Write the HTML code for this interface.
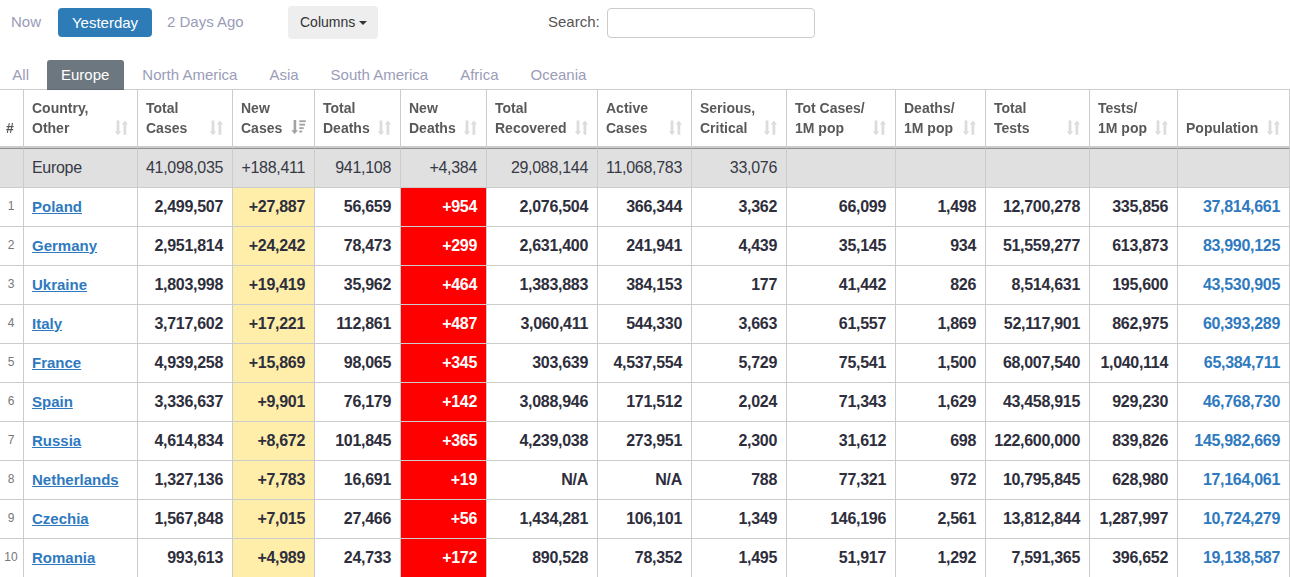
<!DOCTYPE html><html><head><meta charset="utf-8"><style>*{box-sizing:border-box;margin:0;padding:0}
html,body{width:1290px;height:577px;overflow:hidden;background:#fff;font-family:"Liberation Sans",sans-serif;color:#333}
.top{position:absolute;left:0;top:0;width:1290px;height:50px}
.top>*{position:absolute}
.now{left:11px;top:14px;font-size:15px;color:#9a9cb8;line-height:16px}
.btnp{left:58px;top:8px;width:94px;height:29px;background:#2d7cb8;border-radius:4px;color:#fff;font-size:15px;line-height:29px;text-align:center}
.days{left:167px;top:14px;font-size:15px;color:#9a9cb8;line-height:16px}
.colbtn{left:288px;top:6px;width:90px;height:33px;background:#eee;border-radius:4px;color:#333;font-size:14px;line-height:33px;padding-left:12px}
.caret{display:inline-block;width:0;height:0;border-top:4px solid #333;border-left:4px solid transparent;border-right:4px solid transparent;vertical-align:middle;margin-left:0px;position:relative;top:0px}
.search{left:548px;top:14px;font-size:15px;color:#555;line-height:16px}
.sinput{left:607px;top:8px;width:208px;height:30px;border:1px solid #ccc;border-radius:4px}
.tabs{position:absolute;left:-1.7px;top:60px;z-index:2;list-style:none;white-space:nowrap;font-size:15px}
.tabs li{display:inline-block;padding:0 14px;height:30px;line-height:30px;color:#9a9cb8;border-radius:3px 3px 0 0;margin-right:4px}
.tabs li.active{padding-right:15px;background:#6c777f;color:#fff;box-shadow:inset 0 -1px 0 #5f6870}
table{position:absolute;left:0;top:89px;border-collapse:separate;border-spacing:0;table-layout:fixed;width:1290px;border-top:1px solid #ccc}
th,td{border-right:1px solid #ccc;border-bottom:1px solid #ccc;overflow:hidden;white-space:nowrap}
th{height:58px;position:relative;font-size:14px;font-weight:bold;color:#595959;text-align:left;vertical-align:bottom;padding:0 0 8px 8px;line-height:20px;border-bottom:2px solid #ccc}
th.c0{padding-left:6px}
.si{position:absolute;right:8px;bottom:10px;color:#dcdcdc}
.sd{position:absolute;right:7px;bottom:11px;color:#a3a3a3}
td{height:39px;font-size:16px;letter-spacing:-0.3px;font-weight:bold;color:#2e2e3c;text-align:right;padding:0 9px 1px 8px;vertical-align:middle}
tr.eu td{height:40px;background:#e0e0e0;font-weight:normal;font-size:16px;color:#363945;border-top:1px solid #909090}
tr.eu td.c1{text-align:left}
td.c0{font-size:12px;letter-spacing:0;font-weight:normal;color:#777;text-align:center;padding:0 1px 3px 0}
td.c1{text-align:left}
td.c1 a{color:#2f7abf;text-decoration:underline;font-size:15px;letter-spacing:0}
tr.r td.c3{background:#ffeeaa}
tr.r td.c5{background:#f00;color:#fff}
tr.r td.c13{color:#2f7abf}

.hd{will-change:transform}
</style></head><body>
<div class="top">
<a class="pill now">Now</a><a class="btnp">Yesterday</a><a class="pill days">2 Days Ago</a>
<span class="colbtn">Columns <span class="caret"></span></span>
<label class="search">Search:</label><span class="sinput"></span>
</div>
<ul class="tabs"><li class="t-all">All</li><li class="active t-eu">Europe</li><li class="t-na">North America</li><li class="t-as">Asia</li><li class="t-sa">South America</li><li class="t-af">Africa</li><li class="t-oc">Oceania</li></ul>

<table><colgroup><col style="width:24px"><col style="width:114px"><col style="width:95px"><col style="width:82px"><col style="width:86px"><col style="width:86px"><col style="width:111px"><col style="width:94px"><col style="width:95px"><col style="width:109px"><col style="width:90px"><col style="width:104px"><col style="width:88px"><col style="width:112px"></colgroup>
<thead><tr>
<th class="c0"><div class="hd">#</div></th>
<th class="c1"><div class="hd">Country,<br>Other</div><svg class="si" width="15" height="16" viewBox="0 0 15 16"><path d="M2.6 0.6h2.8v10.6h1.8l-3.2 4-3.2-4h1.8z M9.5 14.8h2.8v-10.4h1.7l-3.15-4-3.15 4h1.8z" fill="currentColor"/></svg></th>
<th class="c2"><div class="hd">Total<br>Cases</div><svg class="si" width="15" height="16" viewBox="0 0 15 16"><path d="M2.6 0.6h2.8v10.6h1.8l-3.2 4-3.2-4h1.8z M9.5 14.8h2.8v-10.4h1.7l-3.15-4-3.15 4h1.8z" fill="currentColor"/></svg></th>
<th class="c3"><div class="hd">New<br>Cases</div><svg class="sd" width="17" height="16" viewBox="0 0 17 16"><path d="M3.6 1.1h2.6v10.2h1.8l-3.4 3.6-3.4-3.6h2.4z" fill="currentColor"/><rect x="9.3" y="1.3" width="6.5" height="1.8" fill="currentColor"/><rect x="9.3" y="4.7" width="5.7" height="1.9" fill="currentColor"/><rect x="9.3" y="8.2" width="4.4" height="1.8" fill="currentColor"/><rect x="9.3" y="11.6" width="2.9" height="1.9" fill="currentColor"/></svg></th>
<th class="c4"><div class="hd">Total<br>Deaths</div><svg class="si" width="15" height="16" viewBox="0 0 15 16"><path d="M2.6 0.6h2.8v10.6h1.8l-3.2 4-3.2-4h1.8z M9.5 14.8h2.8v-10.4h1.7l-3.15-4-3.15 4h1.8z" fill="currentColor"/></svg></th>
<th class="c5"><div class="hd">New<br>Deaths</div><svg class="si" width="15" height="16" viewBox="0 0 15 16"><path d="M2.6 0.6h2.8v10.6h1.8l-3.2 4-3.2-4h1.8z M9.5 14.8h2.8v-10.4h1.7l-3.15-4-3.15 4h1.8z" fill="currentColor"/></svg></th>
<th class="c6"><div class="hd">Total<br>Recovered</div><svg class="si" width="15" height="16" viewBox="0 0 15 16"><path d="M2.6 0.6h2.8v10.6h1.8l-3.2 4-3.2-4h1.8z M9.5 14.8h2.8v-10.4h1.7l-3.15-4-3.15 4h1.8z" fill="currentColor"/></svg></th>
<th class="c7"><div class="hd">Active<br>Cases</div><svg class="si" width="15" height="16" viewBox="0 0 15 16"><path d="M2.6 0.6h2.8v10.6h1.8l-3.2 4-3.2-4h1.8z M9.5 14.8h2.8v-10.4h1.7l-3.15-4-3.15 4h1.8z" fill="currentColor"/></svg></th>
<th class="c8"><div class="hd">Serious,<br>Critical</div><svg class="si" width="15" height="16" viewBox="0 0 15 16"><path d="M2.6 0.6h2.8v10.6h1.8l-3.2 4-3.2-4h1.8z M9.5 14.8h2.8v-10.4h1.7l-3.15-4-3.15 4h1.8z" fill="currentColor"/></svg></th>
<th class="c9"><div class="hd">Tot&nbsp;Cases/<br>1M pop</div><svg class="si" width="15" height="16" viewBox="0 0 15 16"><path d="M2.6 0.6h2.8v10.6h1.8l-3.2 4-3.2-4h1.8z M9.5 14.8h2.8v-10.4h1.7l-3.15-4-3.15 4h1.8z" fill="currentColor"/></svg></th>
<th class="c10"><div class="hd">Deaths/<br>1M pop</div><svg class="si" width="15" height="16" viewBox="0 0 15 16"><path d="M2.6 0.6h2.8v10.6h1.8l-3.2 4-3.2-4h1.8z M9.5 14.8h2.8v-10.4h1.7l-3.15-4-3.15 4h1.8z" fill="currentColor"/></svg></th>
<th class="c11"><div class="hd">Total<br>Tests</div><svg class="si" width="15" height="16" viewBox="0 0 15 16"><path d="M2.6 0.6h2.8v10.6h1.8l-3.2 4-3.2-4h1.8z M9.5 14.8h2.8v-10.4h1.7l-3.15-4-3.15 4h1.8z" fill="currentColor"/></svg></th>
<th class="c12"><div class="hd">Tests/<br>1M pop</div><svg class="si" width="15" height="16" viewBox="0 0 15 16"><path d="M2.6 0.6h2.8v10.6h1.8l-3.2 4-3.2-4h1.8z M9.5 14.8h2.8v-10.4h1.7l-3.15-4-3.15 4h1.8z" fill="currentColor"/></svg></th>
<th class="c13"><div class="hd">Population</div><svg class="si" width="15" height="16" viewBox="0 0 15 16"><path d="M2.6 0.6h2.8v10.6h1.8l-3.2 4-3.2-4h1.8z M9.5 14.8h2.8v-10.4h1.7l-3.15-4-3.15 4h1.8z" fill="currentColor"/></svg></th>
</tr></thead><tbody>
<tr class="eu"><td class="c0"></td><td class="c1">Europe</td><td class="c2">41,098,035</td><td class="c3">+188,411</td><td class="c4">941,108</td><td class="c5">+4,384</td><td class="c6">29,088,144</td><td class="c7">11,068,783</td><td class="c8">33,076</td><td class="c9"></td><td class="c10"></td><td class="c11"></td><td class="c12"></td><td class="c13"></td></tr>
<tr class="r"><td class="c0">1</td><td class="c1"><a>Poland</a></td><td class="c2">2,499,507</td><td class="c3">+27,887</td><td class="c4">56,659</td><td class="c5">+954</td><td class="c6">2,076,504</td><td class="c7">366,344</td><td class="c8">3,362</td><td class="c9">66,099</td><td class="c10">1,498</td><td class="c11">12,700,278</td><td class="c12">335,856</td><td class="c13">37,814,661</td></tr>
<tr class="r"><td class="c0">2</td><td class="c1"><a>Germany</a></td><td class="c2">2,951,814</td><td class="c3">+24,242</td><td class="c4">78,473</td><td class="c5">+299</td><td class="c6">2,631,400</td><td class="c7">241,941</td><td class="c8">4,439</td><td class="c9">35,145</td><td class="c10">934</td><td class="c11">51,559,277</td><td class="c12">613,873</td><td class="c13">83,990,125</td></tr>
<tr class="r"><td class="c0">3</td><td class="c1"><a>Ukraine</a></td><td class="c2">1,803,998</td><td class="c3">+19,419</td><td class="c4">35,962</td><td class="c5">+464</td><td class="c6">1,383,883</td><td class="c7">384,153</td><td class="c8">177</td><td class="c9">41,442</td><td class="c10">826</td><td class="c11">8,514,631</td><td class="c12">195,600</td><td class="c13">43,530,905</td></tr>
<tr class="r"><td class="c0">4</td><td class="c1"><a>Italy</a></td><td class="c2">3,717,602</td><td class="c3">+17,221</td><td class="c4">112,861</td><td class="c5">+487</td><td class="c6">3,060,411</td><td class="c7">544,330</td><td class="c8">3,663</td><td class="c9">61,557</td><td class="c10">1,869</td><td class="c11">52,117,901</td><td class="c12">862,975</td><td class="c13">60,393,289</td></tr>
<tr class="r"><td class="c0">5</td><td class="c1"><a>France</a></td><td class="c2">4,939,258</td><td class="c3">+15,869</td><td class="c4">98,065</td><td class="c5">+345</td><td class="c6">303,639</td><td class="c7">4,537,554</td><td class="c8">5,729</td><td class="c9">75,541</td><td class="c10">1,500</td><td class="c11">68,007,540</td><td class="c12">1,040,114</td><td class="c13">65,384,711</td></tr>
<tr class="r"><td class="c0">6</td><td class="c1"><a>Spain</a></td><td class="c2">3,336,637</td><td class="c3">+9,901</td><td class="c4">76,179</td><td class="c5">+142</td><td class="c6">3,088,946</td><td class="c7">171,512</td><td class="c8">2,024</td><td class="c9">71,343</td><td class="c10">1,629</td><td class="c11">43,458,915</td><td class="c12">929,230</td><td class="c13">46,768,730</td></tr>
<tr class="r"><td class="c0">7</td><td class="c1"><a>Russia</a></td><td class="c2">4,614,834</td><td class="c3">+8,672</td><td class="c4">101,845</td><td class="c5">+365</td><td class="c6">4,239,038</td><td class="c7">273,951</td><td class="c8">2,300</td><td class="c9">31,612</td><td class="c10">698</td><td class="c11">122,600,000</td><td class="c12">839,826</td><td class="c13">145,982,669</td></tr>
<tr class="r"><td class="c0">8</td><td class="c1"><a>Netherlands</a></td><td class="c2">1,327,136</td><td class="c3">+7,783</td><td class="c4">16,691</td><td class="c5">+19</td><td class="c6">N/A</td><td class="c7">N/A</td><td class="c8">788</td><td class="c9">77,321</td><td class="c10">972</td><td class="c11">10,795,845</td><td class="c12">628,980</td><td class="c13">17,164,061</td></tr>
<tr class="r"><td class="c0">9</td><td class="c1"><a>Czechia</a></td><td class="c2">1,567,848</td><td class="c3">+7,015</td><td class="c4">27,466</td><td class="c5">+56</td><td class="c6">1,434,281</td><td class="c7">106,101</td><td class="c8">1,349</td><td class="c9">146,196</td><td class="c10">2,561</td><td class="c11">13,812,844</td><td class="c12">1,287,997</td><td class="c13">10,724,279</td></tr>
<tr class="r"><td class="c0">10</td><td class="c1"><a>Romania</a></td><td class="c2">993,613</td><td class="c3">+4,989</td><td class="c4">24,733</td><td class="c5">+172</td><td class="c6">890,528</td><td class="c7">78,352</td><td class="c8">1,495</td><td class="c9">51,917</td><td class="c10">1,292</td><td class="c11">7,591,365</td><td class="c12">396,652</td><td class="c13">19,138,587</td></tr>
</tbody></table></body></html>
